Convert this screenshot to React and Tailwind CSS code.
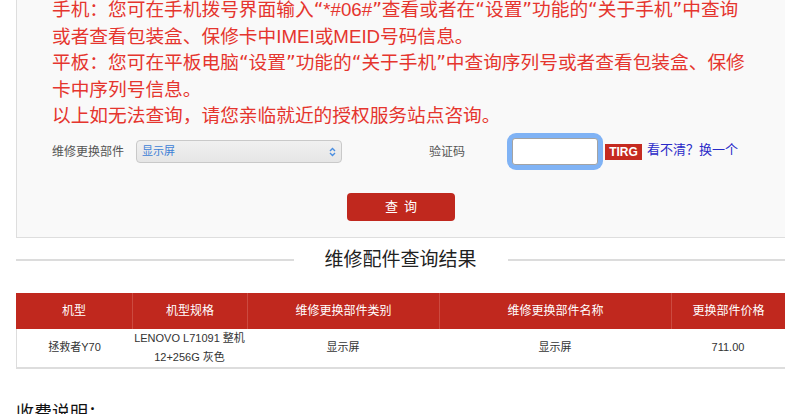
import React from 'react';

const columns = [
  { title: '机型', width: 'w-[116px]' },
  { title: '机型规格', width: 'w-[115px]' },
  { title: '维修更换部件类别', width: 'w-[192px]' },
  { title: '维修更换部件名称', width: 'w-[232px]' },
  { title: '更换部件价格', width: 'w-[114px]' },
];

// quotes in the notice are wider than Arial's
const Q = ({ children }) => (
  <span style={{ fontFamily: '"DejaVu Sans", sans-serif' }}>{children}</span>
);

const SelectArrows = () => (
  <svg width="7" height="10" viewBox="0 0 7 10" fill="none">
    <path d="M1 4 L3.5 1.5 L6 4" stroke="#4a8ee0" strokeWidth="1.4" />
    <path d="M1 6 L3.5 8.5 L6 6" stroke="#4a8ee0" strokeWidth="1.4" />
  </svg>
);

const App = () => {
  return (
    <div
      className="w-[798px] h-[414px] overflow-hidden bg-white"
      style={{ fontFamily: '"Liberation Sans", "Noto Sans CJK SC", sans-serif' }}
    >
      {/* Query panel */}
      <div className="ml-[16px] w-[769px] bg-[#f9f9f9] border-l border-b border-[#dedede] -mt-[3px] pb-[16px]">
        {/* Notice text */}
        <div className="pl-[35px] text-[18.7px] leading-[26.5px] text-[#e5352e] whitespace-nowrap">
          <p>
            手机：您可在手机拨号界面输入<Q>“</Q>*#06#<Q>”</Q>查看或者在<Q>“</Q>设置<Q>”</Q>功能的<Q>“</Q>关于手机<Q>”</Q>中查询
          </p>
          <p>或者查看包装盒、保修卡中IMEI或MEID号码信息。</p>
          <p>
            平板：您可在平板电脑<Q>“</Q>设置<Q>”</Q>功能的<Q>“</Q>关于手机<Q>”</Q>中查询序列号或者查看包装盒、保修
          </p>
          <p>卡中序列号信息。</p>
          <p>以上如无法查询，请您亲临就近的授权服务站点咨询。</p>
        </div>

        {/* Form row */}
        <div className="flex items-center h-[38px] mt-[3px] pl-[35px]">
          <span className="w-[84px] text-[12px] text-[#555]">维修更换部件</span>
          <div className="w-[206px] h-[23px] flex items-center justify-between px-[5px] rounded-[4px] border border-[#c9c9c9] bg-gradient-to-b from-[#f0f0f0] to-[#e6e6e6]">
            <span className="text-[11px] text-[#3d7fd6]">显示屏</span>
            <SelectArrows />
          </div>
          <span className="ml-[87px] w-[78px] text-[12px] text-[#555]">验证码</span>
          <div className="w-[96px] h-[37px] rounded-[9px] bg-[#80b3f5] p-[5px]">
            <div className="w-full h-full rounded-[3px] border border-[#a3a3a3] bg-white" />
          </div>
          <span className="ml-[2px] w-[37px] h-[16px] flex items-center justify-center bg-[#c52a20] text-white text-[12px] font-bold leading-none">
            TIRG
          </span>
          <span className="ml-[5px] -mt-[4px] text-[13px] text-[#2a2ac8]">看不清？换一个</span>
        </div>

        {/* Submit */}
        <div className="flex justify-center mt-[22px]">
          <button className="w-[108px] h-[28px] rounded-[4px] bg-[#c0281e] text-white text-[13px] tracking-[6px] pl-[6px]">
            查询
          </button>
        </div>
      </div>

      {/* Section title */}
      <div className="ml-[16px] w-[769px] flex items-center mt-[10px] h-[24px]">
        <div className="flex-1 h-[2px] bg-[#dcdcdc]" />
        <h2 className="px-[31px] text-[19px] leading-[24px] text-[#222]">维修配件查询结果</h2>
        <div className="flex-1 h-[2px] bg-[#dcdcdc]" />
      </div>

      {/* Result table */}
      <div className="ml-[16px] w-[769px] mt-[21px]">
        <div className="flex h-[36px] bg-[#c0281e] text-white text-[12px]">
          {columns.map((col, i) => (
            <div
              key={col.title}
              className={`${col.width} flex items-center justify-center ${i > 0 ? 'border-l border-[#cc4a40]' : ''}`}
            >
              {col.title}
            </div>
          ))}
        </div>
        <div className="flex h-[40px] border-l border-b-2 border-[#dddddd] text-[11px] text-[#333]">
          <div className="w-[115px] flex items-center justify-center">拯救者Y70</div>
          <div className="w-[115px] flex flex-col items-center justify-center leading-[19px]">
            <span>LENOVO L71091 整机</span>
            <span>12+256G 灰色</span>
          </div>
          <div className="w-[192px] flex items-center justify-center">显示屏</div>
          <div className="w-[232px] flex items-center justify-center">显示屏</div>
          <div className="w-[114px] flex items-center justify-center">711.00</div>
        </div>
      </div>

      {/* Fee notes */}
      <p className="ml-[16px] mt-[32px] text-[18px] leading-[24px] text-[#111]">收费说明：</p>
    </div>
  );
};

export default App;
